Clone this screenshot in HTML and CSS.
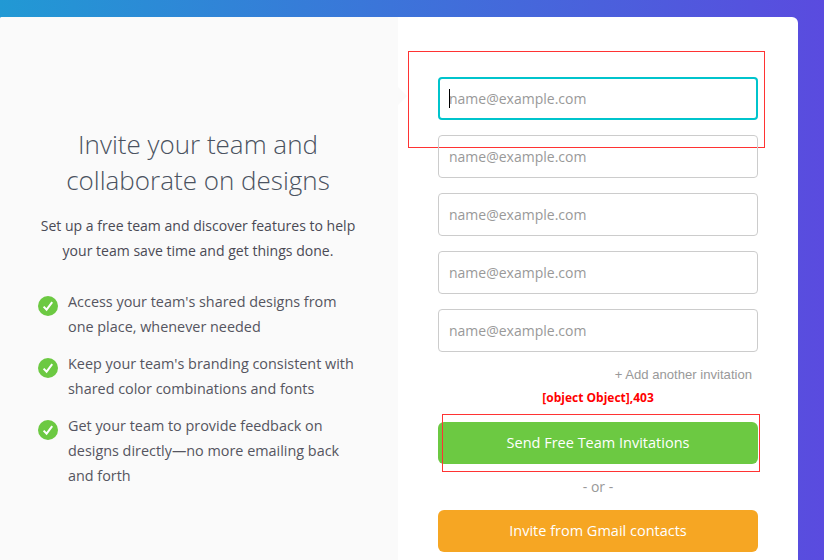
FILE: index.html
```html
<!DOCTYPE html>
<html lang="en">
<head>
<meta charset="utf-8">
<title>Invite your team</title>
<link rel="stylesheet" href="styles.css">
</head>
<body>
<main class="card">
  <section class="intro">
    <h1 class="intro-title">Invite your team and<br>collaborate on designs</h1>
    <p class="intro-lead">Set up a free team and discover features to help your team save time and get things done.</p>
    <ul class="benefits">
      <li class="benefit">
        <svg class="check" viewBox="0 0 20 20" aria-hidden="true"><circle cx="10" cy="10" r="10" fill="#6cc942"/><path d="M5.6 10.6l3 3.1 5.6-7.6" fill="none" stroke="#fff" stroke-width="2"/></svg>
        <span>Access your team's shared designs from one place, whenever needed</span>
      </li>
      <li class="benefit">
        <svg class="check" viewBox="0 0 20 20" aria-hidden="true"><circle cx="10" cy="10" r="10" fill="#6cc942"/><path d="M5.6 10.6l3 3.1 5.6-7.6" fill="none" stroke="#fff" stroke-width="2"/></svg>
        <span>Keep your team's branding consistent with shared color combinations and fonts</span>
      </li>
      <li class="benefit">
        <svg class="check" viewBox="0 0 20 20" aria-hidden="true"><circle cx="10" cy="10" r="10" fill="#6cc942"/><path d="M5.6 10.6l3 3.1 5.6-7.6" fill="none" stroke="#fff" stroke-width="2"/></svg>
        <span>Get your team to provide feedback on designs directly—no more emailing back and forth</span>
      </li>
    </ul>
  </section>
  <section class="invite">
    <span class="notch"></span>
    <form class="invite-form">
      <div class="field field-active">
        <input class="email email-focus" type="text" placeholder="name@example.com">
        <span class="caret"></span>
        <span class="outline outline-field"></span>
      </div>
      <div class="field"><input class="email" type="text" placeholder="name@example.com"></div>
      <div class="field"><input class="email" type="text" placeholder="name@example.com"></div>
      <div class="field"><input class="email" type="text" placeholder="name@example.com"></div>
      <div class="field"><input class="email" type="text" placeholder="name@example.com"></div>
      <div class="add-row">+ Add another invitation</div>
      <div class="error">[object Object],403</div>
      <div class="send-wrap">
        <button class="btn btn-send" type="button">Send Free Team Invitations</button>
        <span class="outline outline-send"></span>
      </div>
      <div class="or">- or -</div>
      <button class="btn btn-gmail" type="button">Invite from Gmail contacts</button>
    </form>
  </section>
</main>
</body>
</html>
```
FILE: styles.css
```css
* { box-sizing: border-box; }
html, body { margin: 0; height: 560px; overflow: hidden; }
body {
  background: linear-gradient(90deg, #2199d4 0%, #5a4bdf 100%);
  padding: 17px 26px 0 0;
  font-family: "Open Sans", sans-serif;
  color: #4a4a55;
}
.card {
  display: flex;
  height: 543px;
  background: #fff;
  border-radius: 2px 6px 0 0;
  overflow: hidden;
}
.intro {
  width: 398px;
  flex: none;
  background: #fafafa;
  padding: 109px 40.5px 0 38.5px;
}
.intro-title {
  margin: 0;
  font-size: 26px;
  font-weight: 300;
  line-height: 36px;
  text-align: center;
  color: #4a5260;
}
.intro-lead {
  margin: 15px 0 0;
  font-size: 14.05px;
  line-height: 25px;
  text-align: center;
  color: #4a4a55;
}
.benefits { list-style: none; margin: 26px 0 0 -.5px; padding: 0; }
.benefit {
  display: flex;
  gap: 10px;
  font-size: 14.4px;
  line-height: 25px;
  margin-bottom: 12px;
  color: #555560;
}
.check { width: 20px; height: 20px; flex: none; margin-top: 7px; }
.invite { position: relative; flex: 1; padding: 60px 40px 0; }
.notch {
  position: absolute;
  left: -8px;
  top: 71px;
  width: 16px;
  height: 16px;
  background: #fafafa;
  transform: rotate(45deg) scale(.8);
}
.invite-form { display: flex; flex-direction: column; width: 320px; }
.field { position: relative; margin-bottom: 15px; }
.email {
  display: block;
  width: 100%;
  height: 43px;
  padding: 0 10px;
  border: 1px solid #ccc;
  border-radius: 4px;
  background: transparent;
  font: 14px "Open Sans", sans-serif;
  color: #333;
  outline: none;
}
.email::placeholder { color: #999; opacity: 1; }
.email-focus { border: 2px solid #00c4cc; padding: 0 9px; }
.caret {
  position: absolute;
  left: 11px;
  top: 12px;
  width: 1px;
  height: 19px;
  background: #000;
}
.outline { position: absolute; border: 1px solid #f33; pointer-events: none; }
.outline-field { left: -30px; top: -26px; width: 357px; height: 97px; }
.add-row {
  padding: 1px 6px 0 0;
  height: 14px;
  text-align: right;
  font: 13.1px/14px "Liberation Sans", sans-serif;
  color: #999;
}
.error {
  margin-top: 9px;
  height: 16px;
  text-align: center;
  font-size: 12px;
  font-weight: 700;
  line-height: 16px;
  color: #f00;
}
.send-wrap { position: relative; margin-top: 16px; }
.btn {
  display: block;
  width: 100%;
  height: 42px;
  padding: 0 0 2px;
  border: 0;
  border-radius: 6px;
  color: #fff;
  font: 14.5px "Open Sans", sans-serif;
}
.btn-send { background: #6cc942; }
.btn-gmail { background: #f6a623; }
.outline-send { left: 4px; top: -8px; width: 318px; height: 58px; }
.or {
  height: 46px;
  line-height: 46px;
  text-align: center;
  font-size: 14px;
  color: #999;
}
```
